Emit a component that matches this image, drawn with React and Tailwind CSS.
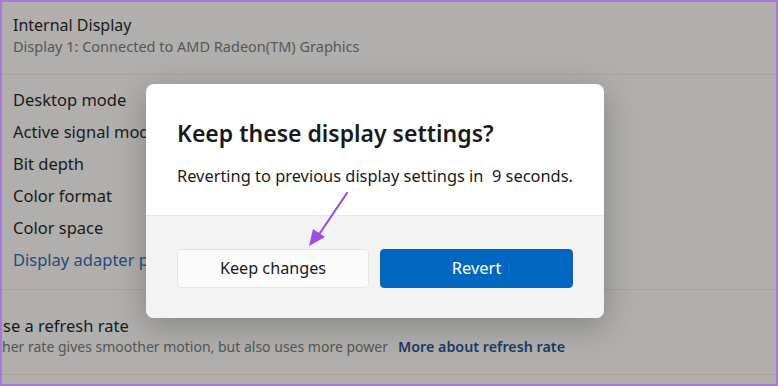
import React from "react";

export default function App() {
  const font = { fontFamily: '"Noto Sans", "Open Sans", sans-serif' };
  return (
    <div className="w-[778px] h-[386px] border-2 border-[#aa78dc] bg-[#b0afad] overflow-hidden relative" style={font}>
      {/* Section 1 */}
      <div className="h-[73px] border-b border-[#a4a3a1] pl-[11px] pt-[12px]">
        <div className="text-[16px] leading-[22px] text-[#1a1a1a]">Internal Display</div>
        <div className="text-[14.5px] leading-[21px] text-[#575757]">Display 1: Connected to AMD Radeon(TM) Graphics</div>
      </div>
      {/* Section 2 */}
      <div className="h-[215px] border-b border-[#a4a3a1] pl-[11px] pt-[9px] text-[16.5px] leading-[32px] text-[#1a1a1a]">
        <div>Desktop mode</div>
        <div className="whitespace-nowrap">Active signal mode</div>
        <div>Bit depth</div>
        <div>Color format</div>
        <div>Color space</div>
        <div className="whitespace-nowrap text-[#274a7c]">Display adapter properties</div>
      </div>
      {/* Section 3 */}
      <div className="h-[85px] border-b border-[#a4a3a1] pl-0 pt-[25px]">
        <div className="text-[16.5px] leading-[22px] text-[#1a1a1a] pl-[1px]">se a refresh rate</div>
        <div className="text-[14px] leading-[20px] text-[#555] flex gap-[10px]">
          <span>her rate gives smoother motion, but also uses more power</span>
          <span className="text-[14.3px] font-semibold text-[#1d3a64]">More about refresh rate</span>
        </div>
      </div>

      {/* Dialog */}
      <div className="absolute left-[144px] top-[82px] w-[458px] h-[234px] rounded-[8px] overflow-hidden bg-white shadow-[0_8px_32px_rgba(0,0,0,0.25)] flex flex-col">
        <div className="h-[132px] px-[31px] pt-[33px] border-b border-[#e5e5e5]">
          <div className="text-[23px] leading-[32px] font-semibold text-[#1a1a1a]">Keep these display settings?</div>
          <div className="mt-[15px] text-[16.4px] leading-[24px] text-[#1a1a1a] whitespace-nowrap">Reverting to previous display settings in&nbsp; 9 seconds.</div>
        </div>
        <div className="flex-1 bg-[#f3f3f3] px-[31px] pt-[33px] flex gap-[11px]">
          <div className="w-[192px] h-[39px] rounded-[4px] bg-[#fbfbfb] border border-[#e5e5e5] flex items-center justify-center text-[16.2px] text-[#1a1a1a]">Keep changes</div>
          <div className="w-[193px] h-[39px] rounded-[4px] bg-[#0067c0] border border-[#1a5fa8] flex items-center justify-center text-[16.5px] text-white">Revert</div>
        </div>
      </div>

      {/* Arrow annotation */}
      <svg className="absolute left-[298px] top-[188px]" width="60" height="64" viewBox="0 0 60 64">
        <line x1="47" y1="3" x2="18" y2="46" stroke="#9d4fe3" strokeWidth="2.2" strokeLinecap="round" />
        <polygon points="9,56 13,39 25,47" fill="#9d4fe3" />
      </svg>
    </div>
  );
}
